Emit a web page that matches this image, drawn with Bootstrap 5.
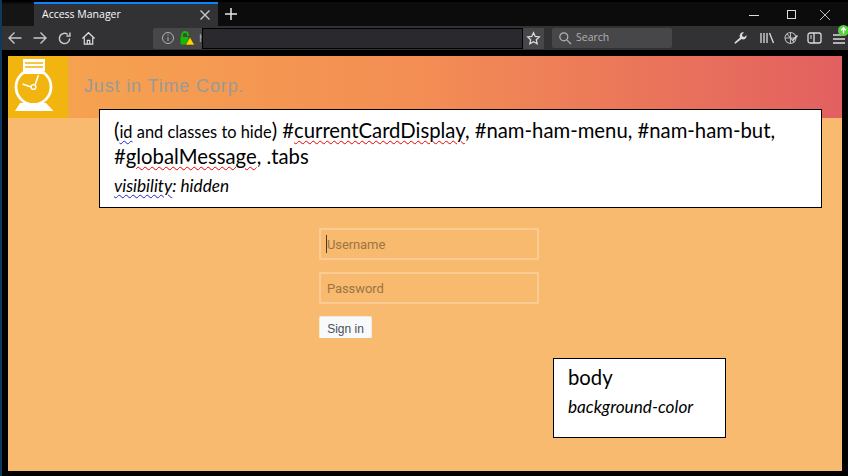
<!DOCTYPE html>
<html lang="en">
<head>
<meta charset="utf-8">
<title>Access Manager</title>
<link href="https://cdn.jsdelivr.net/npm/bootstrap@5.3.0/dist/css/bootstrap.min.css" rel="stylesheet">
<style>
html,body{width:848px;height:476px;overflow:hidden;margin:0;background:#000;}
.win{width:848px;height:476px;position:relative;background:#000;border-left:2px solid #0f3a5c;box-sizing:border-box;font-family:"Open Sans","Noto Sans",sans-serif;}
.strip{height:26px;background:#0c0c0d;padding-top:2px;border-top:2px solid #000;box-sizing:border-box;}
.lead-blank{width:32px;background:#151516;}
.tabx{width:184px;background:#323234;border-top:2px solid #0a84ff;color:#f9f9fa;font-size:10.5px;padding-left:8px;margin-top:-2px;}
.tabname{font-family:"Open Sans",sans-serif;}
.tool{height:24px;background:#323234;padding-left:5px;}
.tool>*{flex:none;}
.urlbar{width:370px;height:21px;margin-left:57px;background:#474749;border-radius:2px;position:relative;color:#b1b1b3;font-size:11px;}
.redact{position:absolute;left:49px;top:0;width:321px;height:21px;background:#2a2a2e;border:1px solid #000;}
.starbox{width:21px;height:21px;background:#474749;margin-left:0;}
.searchb{width:120px;height:20px;background:#474749;margin-left:8px;color:#b1b1b3;font-size:10.5px;border-radius:2px;padding-left:6px;}
.gap-black{height:6px;background:#000;}
.appw{width:834px;height:415px;margin-left:6px;background:#f8ba6e;position:relative;font-family:"Liberation Sans",sans-serif;}
.headbar{height:62px;background:linear-gradient(90deg,#f6a64f 0%,#f38d54 50%,#e26060 100%);}
.logo{width:60px;height:62px;background:#f2b40f;}
.brand{color:#9a9a98;font-size:18px;letter-spacing:.85px;margin-left:16px;margin-top:-2px;font-family:"Liberation Sans",sans-serif;}
.loginf{width:220px;margin-left:311px;margin-top:110px;}
.fieldwrap{position:relative;}
.fieldx{height:32px;margin-bottom:12px;border:2px solid rgba(255,255,255,.26);border-radius:1px;background:transparent;padding:0 6px;font-size:13px;letter-spacing:-.1px;color:#9c7444;font-family:"Roboto",sans-serif;outline:0;}
.fieldx::placeholder{color:#9c7444;opacity:1;}
.caretline{position:absolute;left:7px;top:7px;width:1px;height:18px;background:#4a3a25;}
.signb{display:block;width:53px;height:22px;background:#f8f9fa;color:#495057;font-size:12px;border:1px solid #f1e7da;border-bottom:0;border-radius:2px 2px 0 0;padding:3px 0 0;text-align:center;line-height:16px;}
.note{position:absolute;background:#fff;border:1px solid #000;color:#000;font-family:"Lato","Carlito",sans-serif;}
.note1{left:91px;top:53px;width:723px;height:99px;padding:8px 14px;}
.note2{left:545px;top:302px;width:173px;height:80px;padding:6px 14px;}
.big{font-size:20.3px;line-height:24px;}
.sm{font-size:16.4px;}
.it{font-style:italic;font-size:17.2px;line-height:20px;margin-top:8px;}
.sq-red{text-decoration:underline wavy #e00;text-decoration-thickness:1px;text-underline-offset:2px;}
.sq-blue{text-decoration:underline wavy #22c;text-decoration-thickness:1px;text-underline-offset:2px;}
.ic{display:block;flex:none;}
</style>
</head>
<body>
<div class="win">
  <div class="strip d-flex">
    <div class="lead-blank"></div>
    <div class="tabx d-flex align-items-center justify-content-between">
      <span class="tabname">Access Manager</span>
      <svg class="ic" style="margin-right:5px" width="16" height="16" viewBox="0 0 16 16" fill="none" stroke="#c8c8ca" stroke-width="1.4"><path d="M3.500 3.500l9 9M12.500 3.500l-9 9"/></svg>
    </div>
    <svg class="ic ms-1" style="margin-top:2px" width="18" height="16" viewBox="0 0 18 16" fill="none" stroke="#e8e8e8" stroke-width="1.5"><path d="M9 2v12M3 8h12"/></svg>
    <div class="d-flex ms-auto align-items-center">
      <svg class="ic" width="12" height="12" viewBox="0 0 12 12" stroke="#ddd" fill="none"><path d="M1 6.500h10"/></svg>
      <svg class="ic" style="margin-left:26px" width="12" height="12" viewBox="0 0 12 12" stroke="#ddd" fill="none"><rect x="1.500" y="1.500" width="8" height="8"/></svg>
      <svg class="ic" style="margin:0 17px 0 21px" width="12" height="12" viewBox="0 0 12 12" stroke="#bbb" fill="none"><path d="M1 1l10 10M11 1L1 11"/></svg>
    </div>
  </div>
  <div class="tool d-flex align-items-center">
    <svg class="ic" width="16" height="16" viewBox="0 0 16 16" fill="none" stroke="#c8c8ca" stroke-width="1.4"><path d="M14.500 8H2M7.500 2.500L2 8l5.500 5.500"/></svg>
    <svg class="ic" style="margin-left:9px" width="16" height="16" viewBox="0 0 16 16" fill="none" stroke="#c8c8ca" stroke-width="1.4"><path d="M1.500 8H14M8.500 2.500L14 8l-5.500 5.500"/></svg>
    <svg class="ic" style="margin-left:9px" width="15" height="15" viewBox="0 0 16 16" fill="none" stroke="#c8c8ca" stroke-width="1.6"><path d="M13.500 8A5.500 5.500 0 1 1 11.500 3.700M13.800 1.500v3.800H10"/></svg>
    <svg class="ic" style="margin-left:9px" width="15" height="15" viewBox="0 0 16 16" fill="none" stroke="#dcdcde" stroke-width="1.3"><path d="M1.500 8L8 1.800 14.500 8M3.500 7v7h9V7M6.700 14v-4h2.600v4"/></svg>
    <div class="urlbar d-flex align-items-center ps-2">
      <svg class="ic" width="14" height="14" viewBox="0 0 14 14" fill="none" stroke="#b1b1b3"><circle cx="7" cy="7" r="5.500"/><path d="M7 6v4M7 3.500v1.200"/></svg>
      <svg class="ic ms-1" width="16" height="16" viewBox="0 0 16 16"><path d="M3 8V5a3 3 0 0 1 6 0v1" fill="none" stroke="#12bc00" stroke-width="1.800"/><rect x="1.500" y="7" width="8" height="7.500" rx="1" fill="#12bc00"/><path d="M11 7l4.500 8h-9z" fill="#ffd400" stroke="#3a3a20" stroke-width=".5"/></svg>
      <span class="ms-1">h</span>
      <div class="redact"></div>
    </div>
    <div class="starbox d-flex align-items-center justify-content-center">
      <svg class="ic" width="15" height="15" viewBox="0 0 16 16" fill="none" stroke="#dcdcde" stroke-width="1.300"><path d="M8 1.800l1.900 4 4.300.5-3.200 3 .9 4.300L8 11.500l-3.900 2.100.9-4.300-3.200-3 4.300-.5z"/></svg>
    </div>
    <div class="searchb d-flex align-items-center">
      <svg class="ic" width="14" height="14" viewBox="0 0 14 14" fill="none" stroke="#b1b1b3" stroke-width="1.200"><circle cx="5.800" cy="5.800" r="4"/><path d="M8.800 8.800L13 13"/></svg>
      <span class="ms-1">Search</span>
    </div>
    <svg class="ic" style="margin-left:62px" width="14" height="14" viewBox="0 0 14 14" fill="#dcdcde"><path d="M1 13l-.500-1.500L6 6.500a3.500 3.500 0 0 1 4-5l-2 2 .5 2 2 .5 2-2a3.500 3.500 0 0 1-5 4z"/></svg>
    <svg class="ic" style="margin-left:11px" width="16" height="14" viewBox="0 0 16 14" fill="none" stroke="#dcdcde" stroke-width="1.300"><path d="M2 2v10M5 2v10M8 2v10M10.500 2l4 10"/></svg>
    <svg class="ic" style="margin-left:8px" width="16" height="16" viewBox="0 0 16 16" fill="none" stroke="#b9b9bb" stroke-width="1.100"><circle cx="7.500" cy="8" r="5.500"/><path d="M2 8h11M7.500 2.500v11M4 4l7 8"/><path d="M9 10l5-5 1 1-5 5z" fill="#dcdcde" stroke="none"/></svg>
    <svg class="ic" style="margin-left:8px" width="15" height="14" viewBox="0 0 15 14" fill="none" stroke="#dcdcde" stroke-width="1.300"><rect x="1" y="2" width="13" height="10" rx="2"/><path d="M7 2v10"/><path d="M3 5h2M3 7h2" stroke-width="1"/></svg>
    <div class="position-relative" style="margin-left:11px;width:12px;height:14px">
      <svg class="ic" width="12" height="14" viewBox="0 0 12 14" stroke="#dcdcde" stroke-width="1.500"><path d="M0 4h12M0 8h12M0 12h12"/></svg>
      <svg class="ic position-absolute" style="right:-4px;top:-6px" width="11" height="11" viewBox="0 0 11 11"><circle cx="5.500" cy="5.500" r="5.500" fill="#57d13b"/><path d="M5.500 8.500V3M3 5.200l2.500-2.500L8 5.200" fill="none" stroke="#fff" stroke-width="1.500"/></svg>
    </div>
  </div>
  <div class="gap-black"></div>
  <div class="appw">
    <div class="headbar d-flex align-items-center">
      <div class="logo">
        <svg class="ic" width="60" height="62" viewBox="0 0 60 62">
          <path d="M15 3h22v12H15z" fill="#fff"/><path d="M17 7h18M17 11h18" stroke="#f2b40f" stroke-width="1.300"/>
          <path d="M17 15h18l2 3H15z" fill="#fff"/>
          <circle cx="25.500" cy="31" r="17.500" fill="none" stroke="#fff" stroke-width="2.800"/>
          <path d="M27 29L30.500 19M23 31l-8.500-3" stroke="#fff" stroke-width="1.500" fill="none"/>
          <circle cx="25.500" cy="31" r="2.400" fill="none" stroke="#fff" stroke-width="1.400"/>
          <path d="M12 47h26l7.500 8H7z" fill="#fff"/>
        </svg>
      </div>
      <div class="brand">Just in Time Corp.</div>
    </div>
    <form class="loginf">
      <div class="fieldwrap">
        <input class="fieldx d-block w-100" type="text" placeholder="Username" aria-label="Username">
        <span class="caretline"></span>
      </div>
      <input class="fieldx d-block w-100" type="password" placeholder="Password" aria-label="Password">
      <button class="signb" type="button">Sign in</button>
    </form>
    <div class="note note1">
      <div class="big">(<span class="sm"><span class="sq-blue">id</span> and classes to hide</span>) #<span class="sq-red">currentCardDisplay</span>, #nam-ham-menu, #nam-ham-but,<br>#<span class="sq-red">globalMessage</span>, .tabs</div>
      <div class="it"><span class="sq-blue">visibility</span>: hidden</div>
    </div>
    <div class="note note2">
      <div class="big">body</div>
      <div class="it">background-color</div>
    </div>
  </div>
</div>
<script src="https://cdn.jsdelivr.net/npm/bootstrap@5.3.0/dist/js/bootstrap.bundle.min.js"></script>
</body>
</html>
